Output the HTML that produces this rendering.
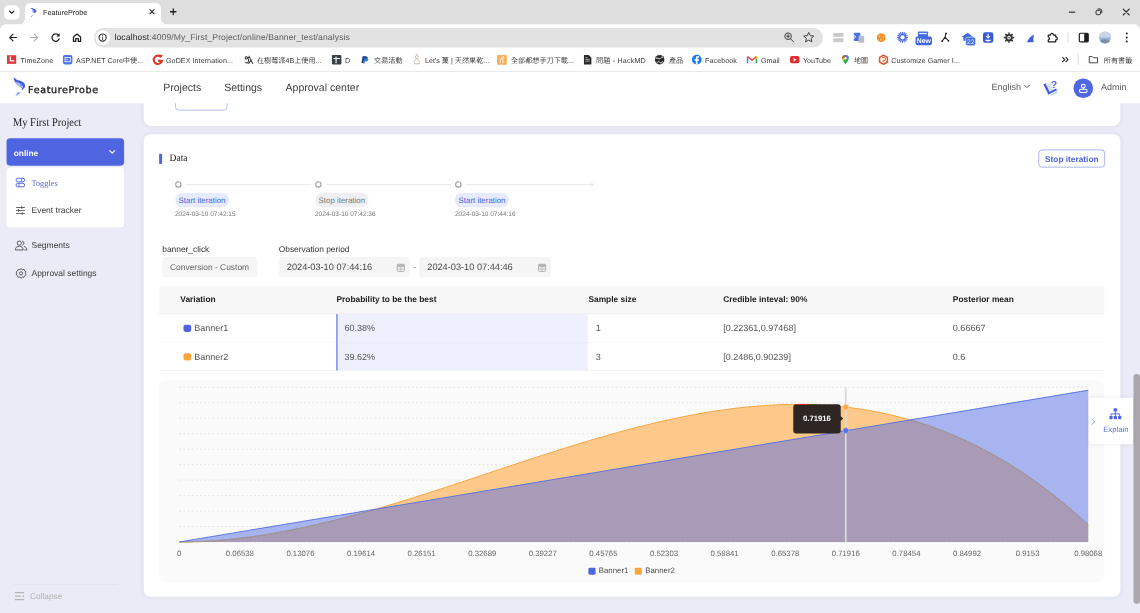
<!DOCTYPE html>
<html lang="en">
<head>
<meta charset="utf-8">
<title>FeatureProbe</title>
<style>
*{box-sizing:border-box;margin:0;padding:0}
html,body{width:1140px;height:613px;overflow:hidden;background:#eaebf6}
body{font-family:"Liberation Sans","Noto Sans CJK TC",sans-serif;color:#333;text-rendering:geometricPrecision}
#stage{position:absolute;left:0;top:0;width:1920px;height:1032.4px;transform:scale(.59375);transform-origin:0 0;overflow:hidden;backface-visibility:hidden}
.abs{position:absolute}
.t{position:absolute;white-space:nowrap;line-height:1}
svg{position:absolute;overflow:visible}
/* ---------- browser chrome ---------- */
#tabstrip{position:absolute;left:0;top:0;width:1920px;height:56px;background:#dedede}
#toolbar{position:absolute;left:0;top:40.500px;width:1920px;height:80px;background:#fff;border-radius:10px 10px 0 0;border-bottom:1.400px solid #c9c9c9}
#tabbtn{position:absolute;left:6.5px;top:8.5px;width:26.5px;height:24.5px;background:#fff;border-radius:8px}
#tab{position:absolute;left:42px;top:5.200px;width:229px;height:36.300px;background:#fff;border-radius:9px 9px 0 0}
#tab:before,#tab:after{content:"";position:absolute;bottom:0;width:10px;height:10px;background:radial-gradient(circle at 0 0,transparent 9.5px,#fff 10px)}
#tab:before{left:-10px}
#tab:after{right:-10px;background:radial-gradient(circle at 100% 0,transparent 9.5px,#fff 10px)}
#omni{position:absolute;left:158px;top:46.5px;width:1228px;height:33.5px;border-radius:17px;background:#e2e2e2}
#chip{position:absolute;left:160.5px;top:51px;width:24.5px;height:24.5px;border-radius:50%;background:#fff}
.bm{position:absolute;z-index:3;top:94.900px;color:#444;font-size:12px;line-height:14px;color:#3a3a3a;white-space:nowrap}
.cj{font-weight:350;color:#333}
.bi{position:absolute;top:92.5px;width:16px;height:16px}
/* ---------- app ---------- */
#hdr{position:absolute;left:0;top:120.600px;width:1920px;height:53.400px;background:#fff;z-index:5}
#side{position:absolute;left:0;top:174px;width:242px;height:860px;background:#eaebf6}
.nav{font-size:17.700px;color:#404040}
.card{position:absolute;left:242px;width:1645px;background:#fff;box-shadow:0 0 7px rgba(90,95,150,.10)}
.b14{font-size:14px}
.th{font-size:14.100px;font-weight:bold;color:#212121;top:497px}
.td{font-size:15.200px;color:#555}
.pill{position:absolute;height:24px;border-radius:12px;font-size:13.300px;line-height:26px;padding:0 6px;white-space:nowrap}
.dt{font-size:11px;color:#777;top:355.400px}
.xl{font-size:13.100px;color:#666;top:925.300px;width:80px;margin-left:-40px;text-align:center}
</style>
</head>
<body>
<div id="stage">

<!-- ================= BROWSER CHROME ================= -->
<div id="tabstrip"></div>
<div id="tabbtn"></div>
<div id="tab"></div>
<div id="toolbar"></div>
<div class="abs" style="left:42px;top:36px;width:229px;height:12px;background:#fff"></div>
<div id="omni"></div>
<div id="chip"></div>
<svg id="chromeicons" style="left:0;top:0;z-index:3" width="1920" height="120" viewBox="0 0 1920 120" fill="none">
 <!-- tab search chevron -->
 <path d="M16.100 18.600 l3.700 3.700 l3.700 -3.700" stroke="#222" stroke-width="1.900" stroke-linecap="round" stroke-linejoin="round"/>
 <!-- favicon -->
 <g transform="translate(49.5,12.800) scale(0.72)">
  <path d="M2 1 C7 0 13 2 16 7 C17 10 15 13 11 13 C12 9 9 5 2 1Z" fill="#3f5be0"/>
  <path d="M5 5 C9 6 12 9 11 13 C8 12 6 9 5 5Z" fill="#9fb0f5"/>
  <path d="M9 17 C8 20 6 22 3 23 C4 21 5 19 9 17Z" fill="#6f86ee"/>
 </g>
 <!-- tab close -->
 <path d="M252.500 16.300 l7 7 M259.500 16.300 l-7 7" stroke="#2a2a2a" stroke-width="1.900" stroke-linecap="round"/>
 <!-- new tab plus -->
 <path d="M287.200 19.8 h9.200 M291.8 15.200 v9.200" stroke="#222" stroke-width="2.200" stroke-linecap="round"/>
 <!-- window controls -->
 <path d="M1800.300 20.500 h10.500" stroke="#222" stroke-width="1.900"/>
 <rect x="1846" y="17.300" width="7.400" height="7.400" rx="2" stroke="#222" stroke-width="1.600"/>
 <path d="M1848.600 15.200 h4.400 a2.500 2.500 0 0 1 2.500 2.500 v4.400" stroke="#222" stroke-width="1.600"/>
 <path d="M1891.800 15.200 l10 10 M1901.800 15.200 l-10 10" stroke="#222" stroke-width="1.900" stroke-linecap="round"/>
 <!-- back -->
 <path d="M27.800 63.2 h-11.300 M21.900 57.600 l-5.600 5.600 l5.600 5.600" stroke="#1f1f1f" stroke-width="1.900" stroke-linecap="round" stroke-linejoin="round"/>
 <!-- forward -->
 <path d="M52 63.2 h11.300 M57.700 57.600 l5.600 5.600 l-5.600 5.600" stroke="#a9a9a9" stroke-width="1.900" stroke-linecap="round" stroke-linejoin="round"/>
 <!-- reload -->
 <path d="M98.900 59.700 a6.200 6.200 0 1 0 0.800 5.700" stroke="#1f1f1f" stroke-width="2.100" stroke-linecap="round"/>
 <path d="M100.300 56 v5.300 h-5.300 z" fill="#1f1f1f"/>
 <!-- home -->
 <path d="M123.700 62.400 l6 -5 l6 5 v7.400 h-3.800 v-4.800 h-4.400 v4.800 h-3.800 z" stroke="#1f1f1f" stroke-width="2.100" stroke-linejoin="round"/>
 <!-- site info -->
 <circle cx="172.8" cy="63.2" r="6" stroke="#333" stroke-width="1.900"/>
 <path d="M172.8 59.900 v0.400 M172.8 62.600 v4" stroke="#333" stroke-width="1.600" stroke-linecap="round"/>
 <!-- zoom icon -->
 <circle cx="1327.3" cy="61" r="5.6" stroke="#3a3a3a" stroke-width="1.6"/>
 <path d="M1331.4 65.2 l5 5 M1324.6 61 h5.4 M1327.3 58.3 v5.4" stroke="#3a3a3a" stroke-width="1.6" stroke-linecap="round"/>
 <!-- star -->
 <path d="M1362.1 54.6 l2.5 5.5 l6 0.6 l-4.5 4 l1.3 5.9 l-5.3 -3.1 l-5.3 3.1 l1.3 -5.9 l-4.5 -4 l6 -0.6 z" stroke="#3a3a3a" stroke-width="1.6" stroke-linejoin="round"/>
 <!-- ext 1: gray bars -->
 <rect x="1403.5" y="55.5" width="17" height="6.5" fill="#c9c9c9"/><rect x="1403.5" y="64.5" width="17" height="6.5" fill="#c9c9c9"/>
 <!-- ext 2: translate -->
 <rect x="1438" y="55" width="11" height="14" rx="1.5" fill="#4a6fe3"/><rect x="1446" y="60" width="9.5" height="12" rx="1.5" fill="#b9bcc4"/>
 <path d="M1441 62 a2.6 2.6 0 1 1 0 -0.1 h-2.4" stroke="#fff" stroke-width="1.2"/>
 <!-- ext 3: orange -->
 <circle cx="1484.2" cy="63.4" r="7.400" fill="#f3922b"/><circle cx="1481.300" cy="61.200" r="1.300" fill="#f9c58a"/><circle cx="1487" cy="62" r="1.200" fill="#f9c58a"/><circle cx="1483.500" cy="66.500" r="1.300" fill="#f9c58a"/><circle cx="1488" cy="66.300" r="1" fill="#f9c58a"/>
 <!-- ext 4: blue gear -->
 <circle cx="1520" cy="62.800" r="4.800" stroke="#4c6fe6" stroke-width="2.400"/>
 <g stroke="#4c6fe6" stroke-width="2" stroke-linecap="round"><path d="M1520 54.400v2M1520 69.200v2M1511.600 62.800h2M1526.400 62.800h2M1514.100 56.900l1.400 1.400M1524.500 67.300l1.400 1.400M1514.100 68.700l1.400-1.400M1524.500 58.300l1.400-1.400M1516.800 55.100l.7 1.700M1522.500 68.800l.7 1.700M1512.300 59.600l1.700.7M1526 65.300l1.700.7M1512.300 66l1.700-.7M1526 60.300l1.700-.7M1516.800 70.500l.7-1.700M1522.500 56.800l.7-1.700"/></g>
 <!-- ext 5: New -->
 <rect x="1546" y="53" width="17" height="11" rx="1.500" fill="#4b6fe0"/><path d="M1548 56.500 h13" stroke="#fff" stroke-width="1.600"/>
 <rect x="1542" y="61.500" width="27.600" height="14.500" rx="3" fill="#4168e0"/>
 <text x="1555.800" y="72.800" font-family="Liberation Sans, sans-serif" font-size="11.500" font-weight="bold" fill="#fff" text-anchor="middle">New</text>
 <!-- ext 6: lambda -->
 <path d="M1593.200 56.500 l-1.600 6 l-4.600 6.500 M1591.600 62.500 l5.600 6" stroke="#222" stroke-width="1.900" stroke-linecap="round" stroke-linejoin="round"/><circle cx="1593.300" cy="56.300" r="1.500" fill="#222"/><circle cx="1586.800" cy="69.300" r="1.500" fill="#222"/><circle cx="1597.500" cy="68.800" r="1.500" fill="#222"/>
 <!-- ext 7: cloud 22 -->
 <path d="M1619.500 62.500 l10 -7.500 l10 7.500 l-3 0 v6 h-14 v-6z" fill="#3f6ae0"/>
 <rect x="1626.500" y="62.500" width="16.500" height="14.500" rx="3.500" fill="#3f6ae0" stroke="#fff" stroke-width="1"/>
 <text x="1634.800" y="74" font-family="Liberation Sans, sans-serif" font-size="11" fill="#fff" text-anchor="middle">22</text>
 <!-- ext 8: blue square download -->
 <rect x="1655.5" y="54.5" width="17.5" height="17.5" rx="4" fill="#3559d8"/>
 <path d="M1664.2 57.5 v6 M1661.2 61 l3 3 l3 -3" stroke="#fff" stroke-width="1.8" stroke-linecap="round" stroke-linejoin="round"/>
 <path d="M1658.5 67 a6 4 0 0 0 11.5 0" fill="#fff"/>
 <!-- ext 9: dark gear -->
 <circle cx="1699.400" cy="63.400" r="4.600" stroke="#333" stroke-width="3.200"/><circle cx="1699.400" cy="63.400" r="1.300" fill="#333"/>
 <g stroke="#333" stroke-width="2.600" stroke-linecap="round"><path d="M1699.400 55.800v1M1699.400 70v1M1691.800 63.400h1M1706 63.400h1M1694 58l.7.700M1704.100 68.100l.7.700M1694 68.800l.7-.7M1704.100 58.700l.7-.7"/></g>
 <!-- ext 10: blue feather -->
 <path d="M1742 58 C1736.500 60 1732 65 1729.500 71 L1740.800 71 C1739.800 66.500 1740.500 62 1742 58Z" fill="#3f5fdc"/>
 <!-- ext 11: puzzle -->
 <path d="M1765.500 59 H1769.100 a2.600 2.600 0 1 1 5.200 0 H1778 V62.100 a2.600 2.600 0 1 1 0 5.200 V70.500 H1765.500 V67.200 a2.500 2.500 0 0 0 0 -4.900 Z" stroke="#1f1f1f" stroke-width="2.100" stroke-linejoin="round"/>
 <!-- separator -->
 <path d="M1798.7 55 v16.5" stroke="#d0d0d0" stroke-width="1.4"/>
 <!-- side panel -->
 <rect x="1817.8" y="56" width="15" height="14.5" rx="2" stroke="#1f1f1f" stroke-width="2"/><rect x="1826" y="56" width="6.8" height="14.5" fill="#1f1f1f"/>
 <!-- avatar -->
 <circle cx="1861" cy="63.2" r="10" fill="#9fb4d8"/><path d="M1851 63 a10 10 0 0 1 20 0z" fill="#c9d6ea"/><path d="M1852.5 68.5 a10 10 0 0 0 17 0 q-8.5 -5 -17 0z" fill="#7d8da6"/>
 <!-- menu -->
 <circle cx="1897.7" cy="56.6" r="1.7" fill="#222"/><circle cx="1897.7" cy="63.2" r="1.7" fill="#222"/><circle cx="1897.7" cy="69.8" r="1.7" fill="#222"/>
 <!-- bookmark bar right -->
 <path d="M1789.800 96.800 l3.500 3.500 l-3.500 3.500 M1795.300 96.800 l3.500 3.500 l-3.500 3.500" stroke="#222" stroke-width="1.900" stroke-linecap="round" stroke-linejoin="round"/>
 <path d="M1816 91.5 v17.5" stroke="#cfcfcf" stroke-width="1.4"/>
 <path d="M1834.5 95.2 h5 l1.8 2 h7.2 v8.6 h-14 z" stroke="#333" stroke-width="1.5" stroke-linejoin="round"/>
</svg>
<div class="t" style="left:72.4px;top:15.500px;font-size:12.2px;color:#222;z-index:3">FeatureProbe</div>
<div class="t" id="url" style="left:192.8px;top:56.800px;font-size:14.4px;letter-spacing:.2px;color:#5a5a5a;z-index:3"><span style="color:#1f1f1f">localhost</span>:4009/My_First_Project/online/Banner_test/analysis</div>

<svg id="bmicons" style="left:0;top:0;z-index:3" width="1920" height="120" viewBox="0 0 1920 120" fill="none">
 <!-- 1 TimeZone: red square with L -->
 <rect x="11.8" y="93" width="15.5" height="14.5" fill="#d93a3a"/><path d="M17.5 95 v7.5 h6.5" stroke="#fff" stroke-width="2.2"/>
 <!-- 2 ASP.NET: blue rounded with screen -->
 <rect x="106" y="92.5" width="16" height="16" rx="3.5" fill="#4f74e8"/><rect x="109.5" y="97" width="9" height="7" stroke="#fff" stroke-width="1.3"/><path d="M111.5 100.5 h3" stroke="#fff" stroke-width="1.2"/>
 <!-- 3 GoDEX: red G -->
 <path d="M271.5 96.5 a7 7 0 1 0 1.2 6 h-6.5" stroke="#d83a2e" stroke-width="3.6"/><path d="M266 93.5 h7.5" stroke="#d83a2e" stroke-width="2.4"/>
 <!-- 4 raspberry-ish: dark swirl -->
 <path d="M413 105.5 c5 2 7 -3 5 -7 c-1 -3 -5 -4 -5 -1 c0 3 4 2 6 -1 M419.5 94.5 l6 12.5 M423 101 l-4 6" stroke="#333" stroke-width="1.7" stroke-linecap="round"/>
 <!-- 5 D: dark square with T cross -->
 <rect x="559" y="92.5" width="16" height="16" rx="2" fill="#3a3f42"/><path d="M561.5 98.5 h11 M566 95 v11.5" stroke="#fff" stroke-width="1.8"/>
 <!-- 6 paypal -->
 <g transform="translate(614.800 100.500) scale(.820) translate(-616 -100.500)"><path d="M611 93.500 h6 c4 0 5 2.500 4.200 5 c-.8 3 -3 4 -6 4 h-1.500 l-1 5 h-4z" fill="#1f3272"/><path d="M614 96.500 h5 c3 0 4 2 3.400 4 c-.7 3 -3 4 -5.400 4 h-1.200 l-.8 4 h-3.200z" fill="#2a7fd0" opacity=".9"/></g>
 <!-- 7 Let's fruit: pale figure -->
 <circle cx="702" cy="96" r="2.4" stroke="#b9a89a" stroke-width="1.2"/><path d="M702 98.5 c-4 2 -5 6 -4 9 h8 c1 -3 0 -7 -4 -9z" stroke="#b9a89a" stroke-width="1.2"/><path d="M700 92.5 l2 -1.5 l2 1.5" stroke="#e0a070" stroke-width="1"/>
 <!-- 8 orange square -->
 <rect x="837" y="92.5" width="16.5" height="16.5" rx="1.5" fill="#f7b05b"/><path d="M843 106 c-1 -5 1 -9 5 -11 c1 2 0 4 -2 5 c2 1 2 4 0 6" stroke="#fff" stroke-width="1.4"/>
 <!-- 9 doc -->
 <path d="M983.5 92.5 h8 l4.5 4.5 v11.5 h-12.5z" fill="#2b2b2b"/><path d="M986 100 h7 M986 103 h7 M986 97 h3" stroke="#fff" stroke-width="1"/>
 <!-- 10 globe -->
 <circle cx="1111" cy="100.5" r="8" fill="#2b2b2b"/><path d="M1105 98 c3 -1 4 1 6 1 c2 0 2 -3 5 -3 M1107 105 c1 -2 3 -2 4 0 c1 2 3 1 5 -1" stroke="#fff" stroke-width="1.5" stroke-linecap="round"/>
 <!-- 11 facebook -->
 <circle cx="1173.5" cy="100.5" r="8.2" fill="#1877f2"/><path d="M1174.8 108.5 v-6 h2.3 l.4 -2.6 h-2.7 v-1.6 c0 -.9 .4 -1.4 1.5 -1.4 h1.3 v-2.3 c-.5 -.1 -1.3 -.2 -2.2 -.2 c-2.3 0 -3.5 1.3 -3.5 3.6 v1.9 h-2.3 v2.6 h2.3 v6z" fill="#fff"/>
 <!-- 12 gmail -->
 <path d="M1259 106.5 v-11" stroke="#4285f4" stroke-width="2.6"/><path d="M1274 106.5 v-11" stroke="#34a853" stroke-width="2.6"/><path d="M1259 95.5 l7.5 6 l7.5 -6" stroke="#ea4335" stroke-width="2.6" stroke-linejoin="round"/><path d="M1272.7 96.5 l1.3 -1 v3" stroke="#fbbc04" stroke-width="2"/>
 <!-- 13 youtube -->
 <rect x="1330.5" y="94.5" width="16" height="12" rx="3.2" fill="#e02f2f"/><path d="M1336.5 97.5 l5 3 l-5 3z" fill="#fff"/>
 <!-- 14 maps pin -->
 <path d="M1424 108.5 c-3 -5 -5.5 -7 -5.5 -10.5 a5.5 5.5 0 0 1 11 0 c0 3.500 -2.500 5.500 -5.500 10.500z" fill="#34a853"/>
 <path d="M1418.500 98 a5.5 5.5 0 0 1 5.500 -5.500 v5.500z" fill="#ea4335"/><path d="M1424 92.500 a5.500 5.500 0 0 1 5.500 5.500 h-5.500z" fill="#4285f4"/><path d="M1418.500 98 h5.500 l-3.500 5z" fill="#fbbc04"/><circle cx="1424" cy="98" r="2" fill="#fff"/>
 <!-- 15 customize gamer: orange hexagon -->
 <path d="M1488 92.800 l6.600 3.800 v7.800 l-6.600 3.800 l-6.600 -3.800 v-7.800z" stroke="#e4572e" stroke-width="2.600" stroke-linejoin="round"/><path d="M1485.500 97 h3.500 a2.500 2.500 0 0 1 0 5 h-2 v2.500" stroke="#e4572e" stroke-width="1.600"/>
</svg>
<div class="bm" style="left:34.5px;letter-spacing:0.2px">TimeZone</div>
<div class="bm" style="left:128px">ASP.NET Core<span class="cj">中使</span>...</div>
<div class="bm" style="left:279.6px;letter-spacing:0.11px">GoDEX Internation...</div>
<div class="bm" style="left:432.8px"><span class="cj">在樹莓派</span>4B<span class="cj">上使用</span>...</div>
<div class="bm" style="left:581px">D</div>
<div class="bm" style="left:630px"><span class="cj">交易活動</span></div>
<div class="bm" style="left:715.8px">Let's <span class="cj">菓</span> | <span class="cj">天然果乾</span>...</div>
<div class="bm" style="left:860.6px"><span class="cj">全部都想手刀下載</span>...</div>
<div class="bm" style="left:1003.8px;letter-spacing:.3px"><span class="cj">問題</span> - HackMD</div>
<div class="bm" style="left:1126.7px"><span class="cj">產品</span></div>
<div class="bm" style="left:1187.4px;letter-spacing:0.15px">Facebook</div>
<div class="bm" style="left:1281.7px">Gmail</div>
<div class="bm" style="left:1352.4px">YouTube</div>
<div class="bm" style="left:1438.3px"><span class="cj">地圖</span></div>
<div class="bm" style="left:1501px;letter-spacing:0.13px">Customize Gamer I...</div>
<div class="bm" style="left:1859px"><span class="cj">所有書籤</span></div>


<!-- ================= APP ================= -->
<div id="hdr"></div>
<div id="hdrc" style="position:absolute;left:0;top:0;z-index:6">
<svg style="left:21px;top:129px" width="24" height="34" viewBox="0 0 24 34" fill="none">
 <path d="M1.6 2 C3.5 2.5 6 4 7.8 5.6 C13 6.500 18.500 8.500 20.200 11.800 C21.500 14 21.300 16 21.100 17.100 C20.500 19 19.500 20 18.400 20.600 L15.800 23.300 C16.500 20 15 17.500 12 16 C8 14 3.500 10 1.600 2Z" fill="#4360e2"/>
 <path d="M5.100 9.100 C9 9.500 14 11.500 16.500 14.500 C18 16.500 18 18 17.600 18.900 C15 18 11 17 8.500 14.500 C6.500 12.500 5.500 11 5.100 9.100Z" fill="#aab9f7"/>
 <circle cx="14.500" cy="14.800" r="1.600" fill="#6f86ee"/>
 <path d="M8.700 25.900 L14 26.800 L9.600 30.400 L5.100 32.700 Z" fill="#8ea0f2"/>
</svg>
<div class="t" id="logo" style="left:47.300px;top:142.800px;font-family:'DejaVu Sans','Liberation Sans',sans-serif;font-size:16px;color:#222;letter-spacing:1.100px;-webkit-text-stroke:.6px #222">FeatureProbe</div>
<div class="t nav" style="left:275px;top:138.700px">Projects</div>
<div class="t nav" style="left:377.500px;top:138.700px">Settings</div>
<div class="t nav" style="left:481px;top:138.700px">Approval center</div>
<div class="t" style="left:1670px;top:139.800px;font-size:15.2px;color:#5c5c5c">English</div>
<svg style="left:1724px;top:141px" width="12" height="9" viewBox="0 0 12 9" fill="none"><path d="M1.500 2.500 l4.200 4.200 l4.200 -4.200" stroke="#555" stroke-width="1.500" stroke-linecap="round" stroke-linejoin="round"/></svg>
<svg style="left:1755.500px;top:135px" width="26" height="26" viewBox="0 0 26 26" fill="none">
 <path d="M12.500 24.800 L24.800 18.600 L25.200 20.800 L15 26Z" fill="#b4c0f5"/>
 <path d="M4 5.800 L15.800 3.200 L22.500 15 L11.500 21Z" fill="#eef1fe"/>
 <path d="M7.500 8.500 l6 -1.400 M8.800 11.200 l6.500 -1.500 M10 13.900 l7 -1.600 M11.200 16.600 l7 -1.800" stroke="#bcc3dc" stroke-width="1.100"/>
 <path d="M1.300 6.800 L9.700 24 L13 22.400 L4.800 5.400Z" fill="#3f5be0"/>
 <path d="M9.700 24 L24.200 16.800 L22.800 14.200 L9 20.800Z" fill="#3f5be0"/>
 <text x="19.300" y="13.600" font-family="Liberation Sans, sans-serif" font-weight="bold" font-size="17" fill="#3f5be0" stroke="#fff" stroke-width="1.800" paint-order="stroke" text-anchor="middle">?</text>
</svg>
<div class="abs" style="left:1808.300px;top:132.400px;width:32.500px;height:32.500px;border-radius:50%;background:#4f68e2"></div>
<svg style="left:1814px;top:139.800px" width="21" height="18" viewBox="0 0 21 18" fill="none">
 <circle cx="10.500" cy="5" r="3.200" stroke="#fff" stroke-width="1.800"/>
 <rect x="4" y="10.200" width="13" height="5.600" rx="2.800" stroke="#fff" stroke-width="1.800"/>
 <path d="M10.500 8.200 v2" stroke="#fff" stroke-width="1.800"/>
</svg>
<div class="t" style="left:1854.300px;top:139.800px;font-size:15.200px;color:#5c5c5c">Admin</div>
</div>

<div id="side"></div>
<div class="t" style="left:21.900px;top:197.900px;font-family:'Liberation Serif',serif;font-size:17.600px;color:#222;transform:scaleY(1.12);transform-origin:0 83.750%">My First Project</div>
<div class="abs" style="left:11px;top:233.300px;width:198px;height:46px;border-radius:6px;background:#4e64e0"></div>
<div class="t" style="left:23.200px;top:249.800px;font-size:14px;font-weight:bold;color:#fff">online</div>
<svg style="left:182px;top:250px" width="14" height="11" viewBox="0 0 14 11" fill="none"><path d="M2.800 3.600 l4.200 4.200 l4.200 -4.200" stroke="#fff" stroke-width="1.900" stroke-linecap="round" stroke-linejoin="round"/></svg>
<div class="abs" style="left:11px;top:282px;width:198px;height:101.300px;border-radius:6px;background:#fff"></div>
<svg style="left:26px;top:299px" width="17" height="17" viewBox="0 0 17 17" fill="none">
 <rect x="1" y="1.300" width="14.500" height="6" rx="3" stroke="#4e64e0" stroke-width="1.600"/>
 <rect x="1" y="9.700" width="14.500" height="6" rx="3" stroke="#4e64e0" stroke-width="1.600"/>
 <path d="M10.500 1.300 v6 M6 9.700 v6" stroke="#4e64e0" stroke-width="1.500"/>
</svg>
<div class="t" style="left:53px;top:303.400px;font-family:'Liberation Serif',serif;font-size:14px;color:#4e64e0">Toggles</div>
<svg style="left:26px;top:346px" width="17" height="17" viewBox="0 0 17 17" fill="none">
 <path d="M1 3.500 h15 M1 8.500 h15 M1 13.500 h15" stroke="#555" stroke-width="1.500"/>
 <path d="M10.500 1.500 v4 M5 6.500 v4 M11.500 11.500 v4" stroke="#555" stroke-width="1.800"/>
</svg>
<div class="t" style="left:53px;top:347.700px;font-size:14.300px;color:#3a3a3a">Event tracker</div>
<svg style="left:24.500px;top:403.500px" width="22" height="19" viewBox="0 0 22 19" fill="none">
 <circle cx="7.500" cy="5.500" r="3.600" stroke="#555" stroke-width="1.600"/><path d="M1 17 c0 -4.300 2.800 -6.300 6.500 -6.300 s6.500 2 6.500 6.300z" stroke="#555" stroke-width="1.600" stroke-linejoin="round"/>
 <path d="M12.800 2.200 a3.500 3.500 0 0 1 0.500 6.600 M16 11.300 c3 .9 4.300 2.700 4.300 5.700 h-3.500" stroke="#555" stroke-width="1.600" stroke-linecap="round"/>
</svg>
<div class="t" style="left:53px;top:406.600px;font-size:14.300px;color:#3a3a3a">Segments</div>
<svg style="left:25.500px;top:450.500px" width="19" height="20" viewBox="0 0 19 20" fill="none">
 <path d="M9.500 1.500 l2.200 1.600 l2.700 -.3 l1 2.500 l2.300 1.500 l-.8 2.600 l.8 2.600 l-2.300 1.500 l-1 2.500 l-2.700 -.3 l-2.200 1.600 l-2.200 -1.600 l-2.700 .3 l-1 -2.500 l-2.300 -1.500 l.8 -2.600 l-.8 -2.600 l2.300 -1.500 l1 -2.500 l2.700 .3z" stroke="#555" stroke-width="1.600" stroke-linejoin="round"/><circle cx="9.500" cy="9.400" r="2.700" stroke="#555" stroke-width="1.600"/>
</svg>
<div class="t" style="left:53px;top:452.800px;font-size:14.300px;color:#3a3a3a">Approval settings</div>
<div class="abs" style="left:22px;top:983.500px;width:176px;height:1.300px;background:#dfe0ea"></div>
<svg style="left:24px;top:996px" width="18" height="16" viewBox="0 0 18 16" fill="none"><path d="M1 2.200 h15.500 M1 8 h10 M1 13.800 h15.500" stroke="#b4b4b8" stroke-width="2"/><path d="M16.500 5.500 v5 l-3.500 -2.500z" fill="#b4b4b8"/></svg>
<div class="t" style="left:50.500px;top:997px;font-size:14px;color:#b0b0b0">Collapse</div>

<div class="card" style="top:150px;height:62.300px;border-radius:0 0 12px 12px"></div>
<div class="abs" style="left:294.700px;top:150px;width:88.500px;height:35.500px;border:1.300px solid #8496ee;border-radius:6px;background:#fff"></div>
<div class="card" style="top:225.800px;height:779.200px;border-radius:12px"></div>
<div class="abs" style="left:268px;top:258.800px;width:4.500px;height:17px;background:#4e64e0"></div>
<div class="t" style="left:285.500px;top:260px;font-family:'Liberation Serif',serif;font-size:16.100px;color:#222;transform:scaleY(1.06);transform-origin:0 83.750%">Data</div>
<div class="abs" style="left:1748.600px;top:251.800px;width:112.400px;height:30.400px;border:1.300px solid #6f83ea;border-radius:6px"></div>
<div class="t" style="left:1760px;top:260.200px;font-size:14px;font-weight:bold;color:#4e64e0">Stop iteration</div>
<!-- timeline -->
<svg style="left:0;top:0" width="1920" height="400" viewBox="0 0 1920 400" fill="none">
 <path d="M312 310.700 H524 M548 310.700 H760 M784 310.700 H1000" stroke="#e6e6e6" stroke-width="1.400"/>
 <path d="M995 307.500 l5 3.200 l-5 3.200" stroke="#e2e2e2" stroke-width="1.300"/>
 <circle cx="300.400" cy="310.700" r="4.500" fill="#fff" stroke="#a0a0a0" stroke-width="1.900"/>
 <circle cx="536.200" cy="310.700" r="4.500" fill="#fff" stroke="#a0a0a0" stroke-width="1.900"/>
 <circle cx="772" cy="310.700" r="4.500" fill="#fff" stroke="#a0a0a0" stroke-width="1.900"/>
</svg>
<div class="pill" style="left:294.700px;top:325px;background:#e6eafd;color:#4e64e0">Start iteration</div>
<div class="pill" style="left:530.500px;top:325px;background:#efeff3;color:#7a7a7a">Stop iteration</div>
<div class="pill" style="left:766.300px;top:325px;background:#e6eafd;color:#4e64e0">Start iteration</div>
<div class="t dt" style="left:294.700px">2024-03-10 07:42:15</div>
<div class="t dt" style="left:530.500px">2024-03-10 07:42:36</div>
<div class="t dt" style="left:766.300px">2024-03-10 07:44:16</div>
<!-- form -->
<div class="t" style="left:273.300px;top:413.300px;font-size:14.100px;color:#333">banner_click</div>
<div class="abs" style="left:273.300px;top:433.300px;width:160px;height:33.500px;border-radius:6px;background:#f5f5f5"></div>
<div class="t" style="left:286.300px;top:443.200px;font-size:14.200px;color:#666">Conversion - Custom</div>
<div class="t" style="left:469.500px;top:413.300px;font-size:14.100px;color:#333">Observation period</div>
<div class="abs" style="left:469.500px;top:433.300px;width:220px;height:33.500px;border-radius:6px;background:#f5f5f5"></div>
<div class="t" style="left:483px;top:442.300px;font-size:15.500px;color:#444">2024-03-10 07:44:16</div>
<div class="abs" style="left:695.600px;top:449.500px;width:5.500px;height:1.200px;background:#888"></div>
<div class="abs" style="left:706.400px;top:433.300px;width:221.500px;height:33.500px;border-radius:6px;background:#f5f5f5"></div>
<div class="t" style="left:719.600px;top:442.300px;font-size:15.500px;color:#444">2024-03-10 07:44:46</div>
<svg style="left:667.500px;top:442.500px" width="14" height="15" viewBox="0 0 14 15" fill="none"><rect x="1" y="2" width="12" height="12" rx="1.500" stroke="#9c9c9c" stroke-width="1.300"/><rect x="1" y="2" width="12" height="3.600" fill="#b4b4b4"/><path d="M1 6 h12 M7 6 v8 M1 10 h12" stroke="#a8a8a8" stroke-width="1.100"/></svg>
<svg style="left:905.600px;top:442.500px" width="14" height="15" viewBox="0 0 14 15" fill="none"><rect x="1" y="2" width="12" height="12" rx="1.500" stroke="#9c9c9c" stroke-width="1.300"/><rect x="1" y="2" width="12" height="3.600" fill="#b4b4b4"/><path d="M1 6 h12 M7 6 v8 M1 10 h12" stroke="#a8a8a8" stroke-width="1.100"/></svg>
<!-- table -->
<div class="abs" style="left:268.200px;top:481.700px;width:1592px;height:46.500px;background:#f7f7f7"></div>
<div class="abs" style="left:268.200px;top:528px;width:1592px;height:1.200px;background:#e8e8e8"></div>
<div class="abs" style="left:268.200px;top:576.600px;width:1592px;height:1.200px;background:#ececec"></div>
<div class="abs" style="left:268.200px;top:624px;width:1592px;height:1.200px;background:#ececec"></div>
<div class="abs" style="left:566.300px;top:529.200px;width:424px;height:94.800px;background:#eef0fe;border-left:3px solid #8e9df0"></div>
<div class="abs" style="left:569px;top:576.600px;width:421px;height:1.200px;background:#e3e6f7"></div>
<div class="t th" style="left:303.700px">Variation</div>
<div class="t th" style="left:566.700px">Probability to be the best</div>
<div class="t th" style="left:991px">Sample size</div>
<div class="t th" style="left:1218px">Credible inteval: 90%</div>
<div class="t th" style="left:1604.800px">Posterior mean</div>
<div class="abs" style="left:309px;top:546.800px;width:12.600px;height:12.600px;border-radius:3.500px;background:#4e64e0"></div>
<div class="abs" style="left:309px;top:594.600px;width:12.600px;height:12.600px;border-radius:3.500px;background:#fda53c"></div>
<div class="t td" style="left:327.200px;top:545.800px">Banner1</div>
<div class="t td" style="left:327.200px;top:593.800px">Banner2</div>
<div class="t td" style="left:580.200px;top:545.800px">60.38%</div>
<div class="t td" style="left:580.200px;top:593.800px">39.62%</div>
<div class="t td" style="left:1003.500px;top:545.800px">1</div>
<div class="t td" style="left:1003.500px;top:593.800px">3</div>
<div class="t td" style="left:1218px;top:545.800px">[0.22361,0.97468]</div>
<div class="t td" style="left:1218px;top:593.800px">[0.2486,0.90239]</div>
<div class="t td" style="left:1604.800px;top:545.800px">0.66667</div>
<div class="t td" style="left:1604.800px;top:593.800px">0.6</div>
<!-- scrollbar -->
<div class="abs" style="left:1908.700px;top:630.400px;width:11.300px;height:386.400px;border-radius:5.600px;background:#a9a7ad"></div>

<!--CHART-START-->
<div class="abs" style="left:268.200px;top:640.800px;width:1592px;height:339px;border-radius:10px;background:#fafafa"></div>
<svg style="left:0;top:0" width="1920" height="1032" viewBox="0 0 1920 1032" fill="none">
<path d="M301.9 912.8 H1832.8" stroke="#dcdcdc" stroke-width="1.300" stroke-dasharray="3 4"/>
<path d="M301.9 886.8 H1832.8" stroke="#dcdcdc" stroke-width="1.300" stroke-dasharray="3 4"/>
<path d="M301.9 860.7 H1832.8" stroke="#dcdcdc" stroke-width="1.300" stroke-dasharray="3 4"/>
<path d="M301.9 834.7 H1832.8" stroke="#dcdcdc" stroke-width="1.300" stroke-dasharray="3 4"/>
<path d="M301.9 808.6 H1832.8" stroke="#dcdcdc" stroke-width="1.300" stroke-dasharray="3 4"/>
<path d="M301.9 782.5 H1832.8" stroke="#dcdcdc" stroke-width="1.300" stroke-dasharray="3 4"/>
<path d="M301.9 756.5 H1832.8" stroke="#dcdcdc" stroke-width="1.300" stroke-dasharray="3 4"/>
<path d="M301.9 730.4 H1832.8" stroke="#dcdcdc" stroke-width="1.300" stroke-dasharray="3 4"/>
<path d="M301.9 704.3 H1832.8" stroke="#dcdcdc" stroke-width="1.300" stroke-dasharray="3 4"/>
<path d="M301.9 678.3 H1832.8" stroke="#dcdcdc" stroke-width="1.300" stroke-dasharray="3 4"/>
<path d="M301.9 652.2 H1832.8" stroke="#dcdcdc" stroke-width="1.300" stroke-dasharray="3 4"/>
<path d="M301.9 912.8 L314.7 910.7 L327.4 908.6 L340.2 906.5 L352.9 904.3 L365.7 902.2 L378.4 900.1 L391.2 897.9 L404.0 895.8 L416.7 893.7 L429.5 891.5 L442.2 889.4 L455.0 887.3 L467.7 885.2 L480.5 883.0 L493.3 880.9 L506.0 878.8 L518.8 876.6 L531.5 874.5 L544.3 872.4 L557.0 870.2 L569.8 868.1 L582.6 866.0 L595.3 863.9 L608.1 861.7 L620.8 859.6 L633.6 857.5 L646.3 855.3 L659.1 853.2 L671.9 851.1 L684.6 848.9 L697.4 846.8 L710.1 844.7 L722.9 842.6 L735.6 840.4 L748.4 838.3 L761.2 836.2 L773.9 834.0 L786.7 831.9 L799.4 829.8 L812.2 827.6 L824.9 825.5 L837.7 823.4 L850.5 821.3 L863.2 819.1 L876.0 817.0 L888.7 814.9 L901.5 812.7 L914.2 810.6 L927.0 808.5 L939.8 806.3 L952.5 804.2 L965.3 802.1 L978.0 800.0 L990.8 797.8 L1003.5 795.7 L1016.3 793.6 L1029.1 791.4 L1041.8 789.3 L1054.6 787.2 L1067.3 785.0 L1080.1 782.9 L1092.8 780.8 L1105.6 778.7 L1118.4 776.5 L1131.1 774.4 L1143.9 772.3 L1156.6 770.1 L1169.4 768.0 L1182.1 765.9 L1194.9 763.7 L1207.7 761.6 L1220.4 759.5 L1233.2 757.4 L1245.9 755.2 L1258.7 753.1 L1271.4 751.0 L1284.2 748.8 L1297.0 746.7 L1309.7 744.6 L1322.5 742.4 L1335.2 740.3 L1348.0 738.2 L1360.7 736.1 L1373.5 733.9 L1386.3 731.8 L1399.0 729.7 L1411.8 727.5 L1424.5 725.4 L1437.3 723.3 L1450.0 721.1 L1462.8 719.0 L1475.6 716.9 L1488.3 714.8 L1501.1 712.6 L1513.8 710.5 L1526.6 708.4 L1539.3 706.2 L1552.1 704.1 L1564.9 702.0 L1577.6 699.8 L1590.4 697.7 L1603.1 695.6 L1615.9 693.5 L1628.6 691.3 L1641.4 689.2 L1654.2 687.1 L1666.9 684.9 L1679.7 682.8 L1692.4 680.7 L1705.2 678.5 L1717.9 676.4 L1730.7 674.3 L1743.5 672.2 L1756.2 670.0 L1769.0 667.9 L1781.7 665.8 L1794.5 663.6 L1807.2 661.5 L1820.0 659.4 L1832.8 657.2 L1832.8 912.8 L301.9 912.8 Z" fill="#fafafa"/>
<path d="M301.9 912.8 L314.7 912.7 L327.4 912.4 L340.2 911.9 L352.9 911.2 L365.7 910.3 L378.4 909.3 L391.2 908.0 L404.0 906.6 L416.7 905.0 L429.5 903.3 L442.2 901.3 L455.0 899.3 L467.7 897.1 L480.5 894.7 L493.3 892.2 L506.0 889.6 L518.8 886.9 L531.5 884.0 L544.3 881.0 L557.0 877.9 L569.8 874.7 L582.6 871.4 L595.3 868.0 L608.1 864.5 L620.8 860.9 L633.6 857.2 L646.3 853.5 L659.1 849.7 L671.9 845.8 L684.6 841.9 L697.4 837.9 L710.1 833.9 L722.9 829.8 L735.6 825.7 L748.4 821.5 L761.2 817.3 L773.9 813.1 L786.7 808.9 L799.4 804.6 L812.2 800.4 L824.9 796.1 L837.7 791.8 L850.5 787.6 L863.2 783.4 L876.0 779.1 L888.7 774.9 L901.5 770.7 L914.2 766.6 L927.0 762.5 L939.8 758.4 L952.5 754.4 L965.3 750.4 L978.0 746.5 L990.8 742.7 L1003.5 738.9 L1016.3 735.2 L1029.1 731.6 L1041.8 728.0 L1054.6 724.6 L1067.3 721.2 L1080.1 718.0 L1092.8 714.8 L1105.6 711.7 L1118.4 708.8 L1131.1 706.0 L1143.9 703.3 L1156.6 700.7 L1169.4 698.3 L1182.1 696.0 L1194.9 693.8 L1207.7 691.8 L1220.4 690.0 L1233.2 688.3 L1245.9 686.8 L1258.7 685.4 L1271.4 684.3 L1284.2 683.3 L1297.0 682.5 L1309.7 681.8 L1322.5 681.4 L1335.2 681.2 L1348.0 681.2 L1360.7 681.4 L1373.5 681.8 L1386.3 682.4 L1399.0 683.3 L1411.8 684.4 L1424.5 685.7 L1437.3 687.3 L1450.0 689.1 L1462.8 691.2 L1475.6 693.5 L1488.3 696.1 L1501.1 698.9 L1513.8 702.1 L1526.6 705.5 L1539.3 709.1 L1552.1 713.1 L1564.9 717.4 L1577.6 722.0 L1590.4 726.8 L1603.1 732.0 L1615.9 737.5 L1628.6 743.3 L1641.4 749.4 L1654.2 755.9 L1666.9 762.7 L1679.7 769.8 L1692.4 777.3 L1705.2 785.2 L1717.9 793.3 L1730.7 801.9 L1743.5 810.8 L1756.2 820.1 L1769.0 829.7 L1781.7 839.8 L1794.5 850.2 L1807.2 861.0 L1820.0 872.2 L1832.8 883.8 L1832.8 912.8 L301.9 912.8 Z" fill="#fafafa"/>
<path d="M301.9 912.8 L314.7 912.7 L327.4 912.4 L340.2 911.9 L352.9 911.2 L365.7 910.3 L378.4 909.3 L391.2 908.0 L404.0 906.6 L416.7 905.0 L429.5 903.3 L442.2 901.3 L455.0 899.3 L467.7 897.1 L480.5 894.7 L493.3 892.2 L506.0 889.6 L518.8 886.9 L531.5 884.0 L544.3 881.0 L557.0 877.9 L569.8 874.7 L582.6 871.4 L595.3 868.0 L608.1 864.5 L620.8 860.9 L633.6 857.2 L646.3 853.5 L659.1 849.7 L671.9 845.8 L684.6 841.9 L697.4 837.9 L710.1 833.9 L722.9 829.8 L735.6 825.7 L748.4 821.5 L761.2 817.3 L773.9 813.1 L786.7 808.9 L799.4 804.6 L812.2 800.4 L824.9 796.1 L837.7 791.8 L850.5 787.6 L863.2 783.4 L876.0 779.1 L888.7 774.9 L901.5 770.7 L914.2 766.6 L927.0 762.5 L939.8 758.4 L952.5 754.4 L965.3 750.4 L978.0 746.5 L990.8 742.7 L1003.5 738.9 L1016.3 735.2 L1029.1 731.6 L1041.8 728.0 L1054.6 724.6 L1067.3 721.2 L1080.1 718.0 L1092.8 714.8 L1105.6 711.7 L1118.4 708.8 L1131.1 706.0 L1143.9 703.3 L1156.6 700.7 L1169.4 698.3 L1182.1 696.0 L1194.9 693.8 L1207.7 691.8 L1220.4 690.0 L1233.2 688.3 L1245.9 686.8 L1258.7 685.4 L1271.4 684.3 L1284.2 683.3 L1297.0 682.5 L1309.7 681.8 L1322.5 681.4 L1335.2 681.2 L1348.0 681.2 L1360.7 681.4 L1373.5 681.8 L1386.3 682.4 L1399.0 683.3 L1411.8 684.4 L1424.5 685.7 L1437.3 687.3 L1450.0 689.1 L1462.8 691.2 L1475.6 693.5 L1488.3 696.1 L1501.1 698.9 L1513.8 702.1 L1526.6 705.5 L1539.3 709.1 L1552.1 713.1 L1564.9 717.4 L1577.6 722.0 L1590.4 726.8 L1603.1 732.0 L1615.9 737.5 L1628.6 743.3 L1641.4 749.4 L1654.2 755.9 L1666.9 762.7 L1679.7 769.8 L1692.4 777.3 L1705.2 785.2 L1717.9 793.3 L1730.7 801.9 L1743.5 810.8 L1756.2 820.1 L1769.0 829.7 L1781.7 839.8 L1794.5 850.2 L1807.2 861.0 L1820.0 872.2 L1832.8 883.8 L1832.8 912.8 L301.9 912.8 Z" fill="#ff981a" fill-opacity=".5"/>
<path d="M301.9 912.8 L314.7 912.7 L327.4 912.4 L340.2 911.9 L352.9 911.2 L365.7 910.3 L378.4 909.3 L391.2 908.0 L404.0 906.6 L416.7 905.0 L429.5 903.3 L442.2 901.3 L455.0 899.3 L467.7 897.1 L480.5 894.7 L493.3 892.2 L506.0 889.6 L518.8 886.9 L531.5 884.0 L544.3 881.0 L557.0 877.9 L569.8 874.7 L582.6 871.4 L595.3 868.0 L608.1 864.5 L620.8 860.9 L633.6 857.2 L646.3 853.5 L659.1 849.7 L671.9 845.8 L684.6 841.9 L697.4 837.9 L710.1 833.9 L722.9 829.8 L735.6 825.7 L748.4 821.5 L761.2 817.3 L773.9 813.1 L786.7 808.9 L799.4 804.6 L812.2 800.4 L824.9 796.1 L837.7 791.8 L850.5 787.6 L863.2 783.4 L876.0 779.1 L888.7 774.9 L901.5 770.7 L914.2 766.6 L927.0 762.5 L939.8 758.4 L952.5 754.4 L965.3 750.4 L978.0 746.5 L990.8 742.7 L1003.5 738.9 L1016.3 735.2 L1029.1 731.6 L1041.8 728.0 L1054.6 724.6 L1067.3 721.2 L1080.1 718.0 L1092.8 714.8 L1105.6 711.7 L1118.4 708.8 L1131.1 706.0 L1143.9 703.3 L1156.6 700.7 L1169.4 698.3 L1182.1 696.0 L1194.9 693.8 L1207.7 691.8 L1220.4 690.0 L1233.2 688.3 L1245.9 686.8 L1258.7 685.4 L1271.4 684.3 L1284.2 683.3 L1297.0 682.5 L1309.7 681.8 L1322.5 681.4 L1335.2 681.2 L1348.0 681.2 L1360.7 681.4 L1373.5 681.8 L1386.3 682.4 L1399.0 683.3 L1411.8 684.4 L1424.5 685.7 L1437.3 687.3 L1450.0 689.1 L1462.8 691.2 L1475.6 693.5 L1488.3 696.1 L1501.1 698.9 L1513.8 702.1 L1526.6 705.5 L1539.3 709.1 L1552.1 713.1 L1564.9 717.4 L1577.6 722.0 L1590.4 726.8 L1603.1 732.0 L1615.9 737.5 L1628.6 743.3 L1641.4 749.4 L1654.2 755.9 L1666.9 762.7 L1679.7 769.8 L1692.4 777.3 L1705.2 785.2 L1717.9 793.3 L1730.7 801.9 L1743.5 810.8 L1756.2 820.1 L1769.0 829.7 L1781.7 839.8 L1794.5 850.2 L1807.2 861.0 L1820.0 872.2 L1832.8 883.8" stroke="#f5a13c" stroke-width="1.600"/>
<path d="M301.9 912.8 L314.7 910.7 L327.4 908.6 L340.2 906.5 L352.9 904.3 L365.7 902.2 L378.4 900.1 L391.2 897.9 L404.0 895.8 L416.7 893.7 L429.5 891.5 L442.2 889.4 L455.0 887.3 L467.7 885.2 L480.5 883.0 L493.3 880.9 L506.0 878.8 L518.8 876.6 L531.5 874.5 L544.3 872.4 L557.0 870.2 L569.8 868.1 L582.6 866.0 L595.3 863.9 L608.1 861.7 L620.8 859.6 L633.6 857.5 L646.3 855.3 L659.1 853.2 L671.9 851.1 L684.6 848.9 L697.4 846.8 L710.1 844.7 L722.9 842.6 L735.6 840.4 L748.4 838.3 L761.2 836.2 L773.9 834.0 L786.7 831.9 L799.4 829.8 L812.2 827.6 L824.9 825.5 L837.7 823.4 L850.5 821.3 L863.2 819.1 L876.0 817.0 L888.7 814.9 L901.5 812.7 L914.2 810.6 L927.0 808.5 L939.8 806.3 L952.5 804.2 L965.3 802.1 L978.0 800.0 L990.8 797.8 L1003.5 795.7 L1016.3 793.6 L1029.1 791.4 L1041.8 789.3 L1054.6 787.2 L1067.3 785.0 L1080.1 782.9 L1092.8 780.8 L1105.6 778.7 L1118.4 776.5 L1131.1 774.4 L1143.9 772.3 L1156.6 770.1 L1169.4 768.0 L1182.1 765.9 L1194.9 763.7 L1207.7 761.6 L1220.4 759.5 L1233.2 757.4 L1245.9 755.2 L1258.7 753.1 L1271.4 751.0 L1284.2 748.8 L1297.0 746.7 L1309.7 744.6 L1322.5 742.4 L1335.2 740.3 L1348.0 738.2 L1360.7 736.1 L1373.5 733.9 L1386.3 731.8 L1399.0 729.7 L1411.8 727.5 L1424.5 725.4 L1437.3 723.3 L1450.0 721.1 L1462.8 719.0 L1475.6 716.9 L1488.3 714.8 L1501.1 712.6 L1513.8 710.5 L1526.6 708.4 L1539.3 706.2 L1552.1 704.1 L1564.9 702.0 L1577.6 699.8 L1590.4 697.7 L1603.1 695.6 L1615.9 693.5 L1628.6 691.3 L1641.4 689.2 L1654.2 687.1 L1666.9 684.9 L1679.7 682.8 L1692.4 680.7 L1705.2 678.5 L1717.9 676.4 L1730.7 674.3 L1743.5 672.2 L1756.2 670.0 L1769.0 667.9 L1781.7 665.8 L1794.5 663.6 L1807.2 661.5 L1820.0 659.4 L1832.8 657.2 L1832.8 912.8 L301.9 912.8 Z" fill="#556ee6" fill-opacity=".5"/>
<path d="M301.9 912.8 L310.4 912.8 L318.8 912.7 L327.3 912.4 L335.7 912.1 L344.2 911.7 L352.6 911.2 L361.1 910.7 L369.6 910.0 L378.0 909.3 L386.5 908.5 L394.9 907.6 L403.4 906.7 L411.8 905.6 L420.3 904.5 L428.8 903.4 L437.2 902.1 L445.7 900.8 L454.1 899.4 L462.6 898.0 L471.0 896.5 L479.5 894.9 L488.0 893.3 L496.4 891.6 L504.9 889.8 L513.3 888.0 L521.8 886.2 L530.2 884.3 L538.7 882.3 L547.2 880.3 L555.6 878.2 L564.1 876.1 L572.5 874.0 L581.0 871.8 L589.5 869.6 L597.9 867.3 L606.4 865.0 L614.8 862.6 L623.3 860.2 L631.7 857.8" stroke="#9c9696" stroke-width="1.500"/>
<path d="M1533.1 707.3 L1540.8 709.6 L1548.4 712.0 L1556.1 714.4 L1563.8 717.0 L1571.5 719.7 L1579.2 722.5 L1586.9 725.5 L1594.5 728.5 L1602.2 731.6 L1609.9 734.9 L1617.6 738.3 L1625.3 741.7 L1633.0 745.4 L1640.7 749.1 L1648.3 752.9 L1656.0 756.9 L1663.7 761.0 L1671.4 765.2 L1679.1 769.5 L1686.8 774.0 L1694.4 778.5 L1702.1 783.2 L1709.8 788.1 L1717.5 793.0 L1725.2 798.1 L1732.9 803.4 L1740.5 808.7 L1748.2 814.2 L1755.9 819.8 L1763.6 825.6 L1771.3 831.5 L1779.0 837.5 L1786.7 843.7 L1794.3 850.0 L1802.0 856.5 L1809.7 863.1 L1817.4 869.9 L1825.1 876.7 L1832.8 883.8" stroke="#9c9696" stroke-width="1.500"/>
<path d="M301.9 912.8 L314.7 910.7 L327.4 908.6 L340.2 906.5 L352.9 904.3 L365.7 902.2 L378.4 900.1 L391.2 897.9 L404.0 895.8 L416.7 893.7 L429.5 891.5 L442.2 889.4 L455.0 887.3 L467.7 885.2 L480.5 883.0 L493.3 880.9 L506.0 878.8 L518.8 876.6 L531.5 874.5 L544.3 872.4 L557.0 870.2 L569.8 868.1 L582.6 866.0 L595.3 863.9 L608.1 861.7 L620.8 859.6 L633.6 857.5 L646.3 855.3 L659.1 853.2 L671.9 851.1 L684.6 848.9 L697.4 846.8 L710.1 844.7 L722.9 842.6 L735.6 840.4 L748.4 838.3 L761.2 836.2 L773.9 834.0 L786.7 831.9 L799.4 829.8 L812.2 827.6 L824.9 825.5 L837.7 823.4 L850.5 821.3 L863.2 819.1 L876.0 817.0 L888.7 814.9 L901.5 812.7 L914.2 810.6 L927.0 808.5 L939.8 806.3 L952.5 804.2 L965.3 802.1 L978.0 800.0 L990.8 797.8 L1003.5 795.7 L1016.3 793.6 L1029.1 791.4 L1041.8 789.3 L1054.6 787.2 L1067.3 785.0 L1080.1 782.9 L1092.8 780.8 L1105.6 778.7 L1118.4 776.5 L1131.1 774.4 L1143.9 772.3 L1156.6 770.1 L1169.4 768.0 L1182.1 765.9 L1194.9 763.7 L1207.7 761.6 L1220.4 759.5 L1233.2 757.4 L1245.9 755.2 L1258.7 753.1 L1271.4 751.0 L1284.2 748.8 L1297.0 746.7 L1309.7 744.6 L1322.5 742.4 L1335.2 740.3 L1348.0 738.2 L1360.7 736.1 L1373.5 733.9 L1386.3 731.8 L1399.0 729.7 L1411.8 727.5 L1424.5 725.4 L1437.3 723.3 L1450.0 721.1 L1462.8 719.0 L1475.6 716.9 L1488.3 714.8 L1501.1 712.6 L1513.8 710.5 L1526.6 708.4 L1539.3 706.2 L1552.1 704.1 L1564.9 702.0 L1577.6 699.8 L1590.4 697.7 L1603.1 695.6 L1615.9 693.5 L1628.6 691.3 L1641.4 689.2 L1654.2 687.1 L1666.9 684.9 L1679.7 682.8 L1692.4 680.7 L1705.2 678.5 L1717.9 676.4 L1730.7 674.3 L1743.5 672.2 L1756.2 670.0 L1769.0 667.9 L1781.7 665.8 L1794.5 663.6 L1807.2 661.5 L1820.0 659.4 L1832.8 657.2" stroke="#5570e4" stroke-width="1.600"/>
<path d="M1424.5 652.2 V912.8" stroke="#dadada" stroke-width="3"/>
<circle cx="1424.5" cy="685.7" r="4.800" fill="#f9a94a" stroke="#fbd9a8" stroke-width="1.200"/>
<circle cx="1424.5" cy="725.4" r="4.800" fill="#5570e4" stroke="#a9b6f2" stroke-width="1.200"/>
</svg>
<div class="t xl" style="left:301.9px">0</div>
<div class="t xl" style="left:404.0px">0.06538</div>
<div class="t xl" style="left:506.0px">0.13076</div>
<div class="t xl" style="left:608.1px">0.19614</div>
<div class="t xl" style="left:710.1px">0.26151</div>
<div class="t xl" style="left:812.2px">0.32689</div>
<div class="t xl" style="left:914.2px">0.39227</div>
<div class="t xl" style="left:1016.3px">0.45765</div>
<div class="t xl" style="left:1118.4px">0.52303</div>
<div class="t xl" style="left:1220.4px">0.58841</div>
<div class="t xl" style="left:1322.5px">0.65378</div>
<div class="t xl" style="left:1424.5px">0.71916</div>
<div class="t xl" style="left:1526.6px">0.78454</div>
<div class="t xl" style="left:1628.6px">0.84992</div>
<div class="t xl" style="left:1730.7px">0.9153</div>
<div class="t xl" style="left:1832.8px">0.98068</div>
<div class="abs" style="left:990.600px;top:955.800px;width:12.300px;height:12.300px;border-radius:2.500px;background:#4e64e0"></div>
<div class="t" style="left:1008.500px;top:953.800px;font-size:13.200px;color:#4a4a4a">Banner1</div>
<div class="abs" style="left:1069px;top:955.800px;width:12.300px;height:12.300px;border-radius:2.500px;background:#fda53c"></div>
<div class="t" style="left:1086.800px;top:953.800px;font-size:13.200px;color:#4a4a4a">Banner2</div>
<div class="abs" style="left:1336px;top:681.300px;width:79.600px;height:48.900px;border-radius:5px;background:#2e2622"></div>
<div class="abs" style="left:1415.300px;top:700.200px;width:0;height:0;border-top:5.500px solid transparent;border-bottom:5.500px solid transparent;border-left:5.500px solid #2e2622"></div>
<div class="abs" style="left:1342px;top:679.800px;width:19px;height:2.200px;background:#e02020"></div>
<div class="t" style="left:1352.400px;top:698.400px;font-size:13px;font-weight:bold;color:#fff">0.71916</div>
<div class="abs" style="left:1833.700px;top:670.400px;width:74.500px;height:77.600px;border-radius:4px 0 0 4px;background:#fff;box-shadow:0 0 6px rgba(120,120,160,.12)"></div>
<svg style="left:1837px;top:703.500px" width="9" height="13" viewBox="0 0 9 13" fill="none"><path d="M2 2 l4.500 4.500 l-4.500 4.500" stroke="#6f83ea" stroke-width="1.400" stroke-linecap="round" stroke-linejoin="round"/></svg>
<svg style="left:1868px;top:686.500px" width="21" height="20" viewBox="0 0 21 20" fill="#4e64e0"><rect x="7.500" y=".500" width="6" height="5.500" rx="1"/><rect x=".500" y="13.500" width="5.500" height="5.500" rx="1"/><rect x="7.750" y="13.500" width="5.500" height="5.500" rx="1"/><rect x="15" y="13.500" width="5.500" height="5.500" rx="1"/><path d="M10.500 6 v7.500 M3.250 13.500 v-3.500 h14.500 v3.500" stroke="#4e64e0" stroke-width="1.600" fill="none"/></svg>
<div class="t" style="left:1858px;top:717px;font-size:13px;color:#5f74e6">Explain</div>
<!--CHART-END-->

</div>
</body>
</html>
